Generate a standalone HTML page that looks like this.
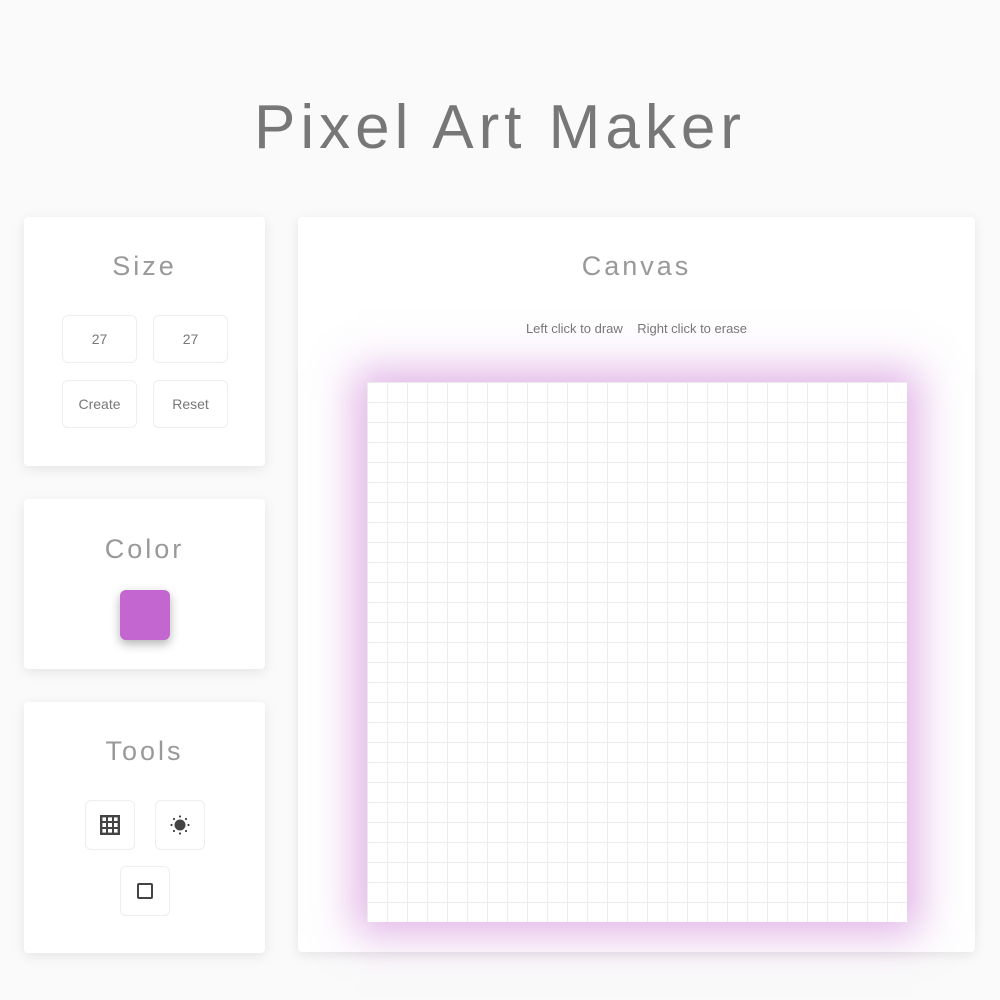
<!DOCTYPE html>
<html><head><style>
body{margin:0;width:1000px;height:1000px;background:#fafafa;font-family:"Liberation Sans",sans-serif;position:relative;overflow:hidden}
.t{position:absolute;left:0;width:1000px;top:92px;text-align:center;font-size:62px;color:#777;letter-spacing:5px;font-weight:300}
.card{position:absolute;background:#fff;border-radius:4px;box-shadow:0 3px 12px rgba(0,0,0,.09)}
.h{position:absolute;left:0;right:0;text-align:center;font-size:27px;color:#999;letter-spacing:3px;font-weight:300}
.b{position:absolute;border:1px solid #eee;border-radius:6px;background:#fff;box-sizing:border-box;display:flex;align-items:center;justify-content:center;font-size:14px;color:#777}
</style></head><body>
<div class="t">Pixel Art Maker</div>
<div class="card" style="left:24px;top:217px;width:241px;height:249px">
<div class="h" style="top:34px">Size</div>
<div class="b" style="left:38px;top:98px;width:75px;height:48px">27</div>
<div class="b" style="left:129px;top:98px;width:75px;height:48px">27</div>
<div class="b" style="left:38px;top:163px;width:75px;height:48px">Create</div>
<div class="b" style="left:129px;top:163px;width:75px;height:48px">Reset</div>
</div>
<div class="card" style="left:24px;top:499px;width:241px;height:170px">
<div class="h" style="top:35px">Color</div>
<div style="position:absolute;left:96px;top:91px;width:50px;height:50px;background:#c466d0;border-radius:6px;box-shadow:0 4px 10px rgba(0,0,0,.3)"></div>
</div>
<div class="card" style="left:24px;top:702px;width:241px;height:251px">
<div class="h" style="top:34px">Tools</div>
<div class="b" style="left:61px;top:98px;width:50px;height:50px"><svg width="20" height="20" viewBox="0 0 20 20"><rect x="1.2" y="1.2" width="17.6" height="17.6" fill="none" stroke="#444" stroke-width="2.4"/><path d="M7 1V19M13 1V19M1 7H19M1 13H19" stroke="#444" stroke-width="2"/></svg></div>
<div class="b" style="left:131px;top:98px;width:50px;height:50px"><svg width="22" height="22" viewBox="0 0 22 22"><circle cx="11" cy="11" r="5.5" fill="#444"/><g fill="#444"><circle cx="11" cy="2.5" r="1.1"/><circle cx="11" cy="19.5" r="1.1"/><circle cx="2.5" cy="11" r="1.1"/><circle cx="19.5" cy="11" r="1.1"/><circle cx="5" cy="5" r="1.1"/><circle cx="17" cy="5" r="1.1"/><circle cx="5" cy="17" r="1.1"/><circle cx="17" cy="17" r="1.1"/></g></svg></div>
<div class="b" style="left:96px;top:164px;width:50px;height:50px"><svg width="16" height="16"><rect x="1" y="1" width="14" height="14" rx="1" fill="none" stroke="#444" stroke-width="2"/></svg></div>
</div>
<div class="card" style="left:298px;top:217px;width:677px;height:735px">
<div class="h" style="top:34px">Canvas</div>
<div style="position:absolute;left:0;right:0;top:104px;text-align:center;font-size:13px;color:#777">Left click to draw &nbsp;&nbsp; Right click to erase</div>
<div style="position:absolute;left:69px;top:165px;width:540px;height:540px;background-color:#fff;background-image:linear-gradient(to right,#ececec 1px,transparent 1px),linear-gradient(to bottom,#ececec 1px,transparent 1px);background-size:20px 20px;box-shadow:0 0 40px 12px rgba(196,102,208,.5)"></div>
</div>
</body></html>
